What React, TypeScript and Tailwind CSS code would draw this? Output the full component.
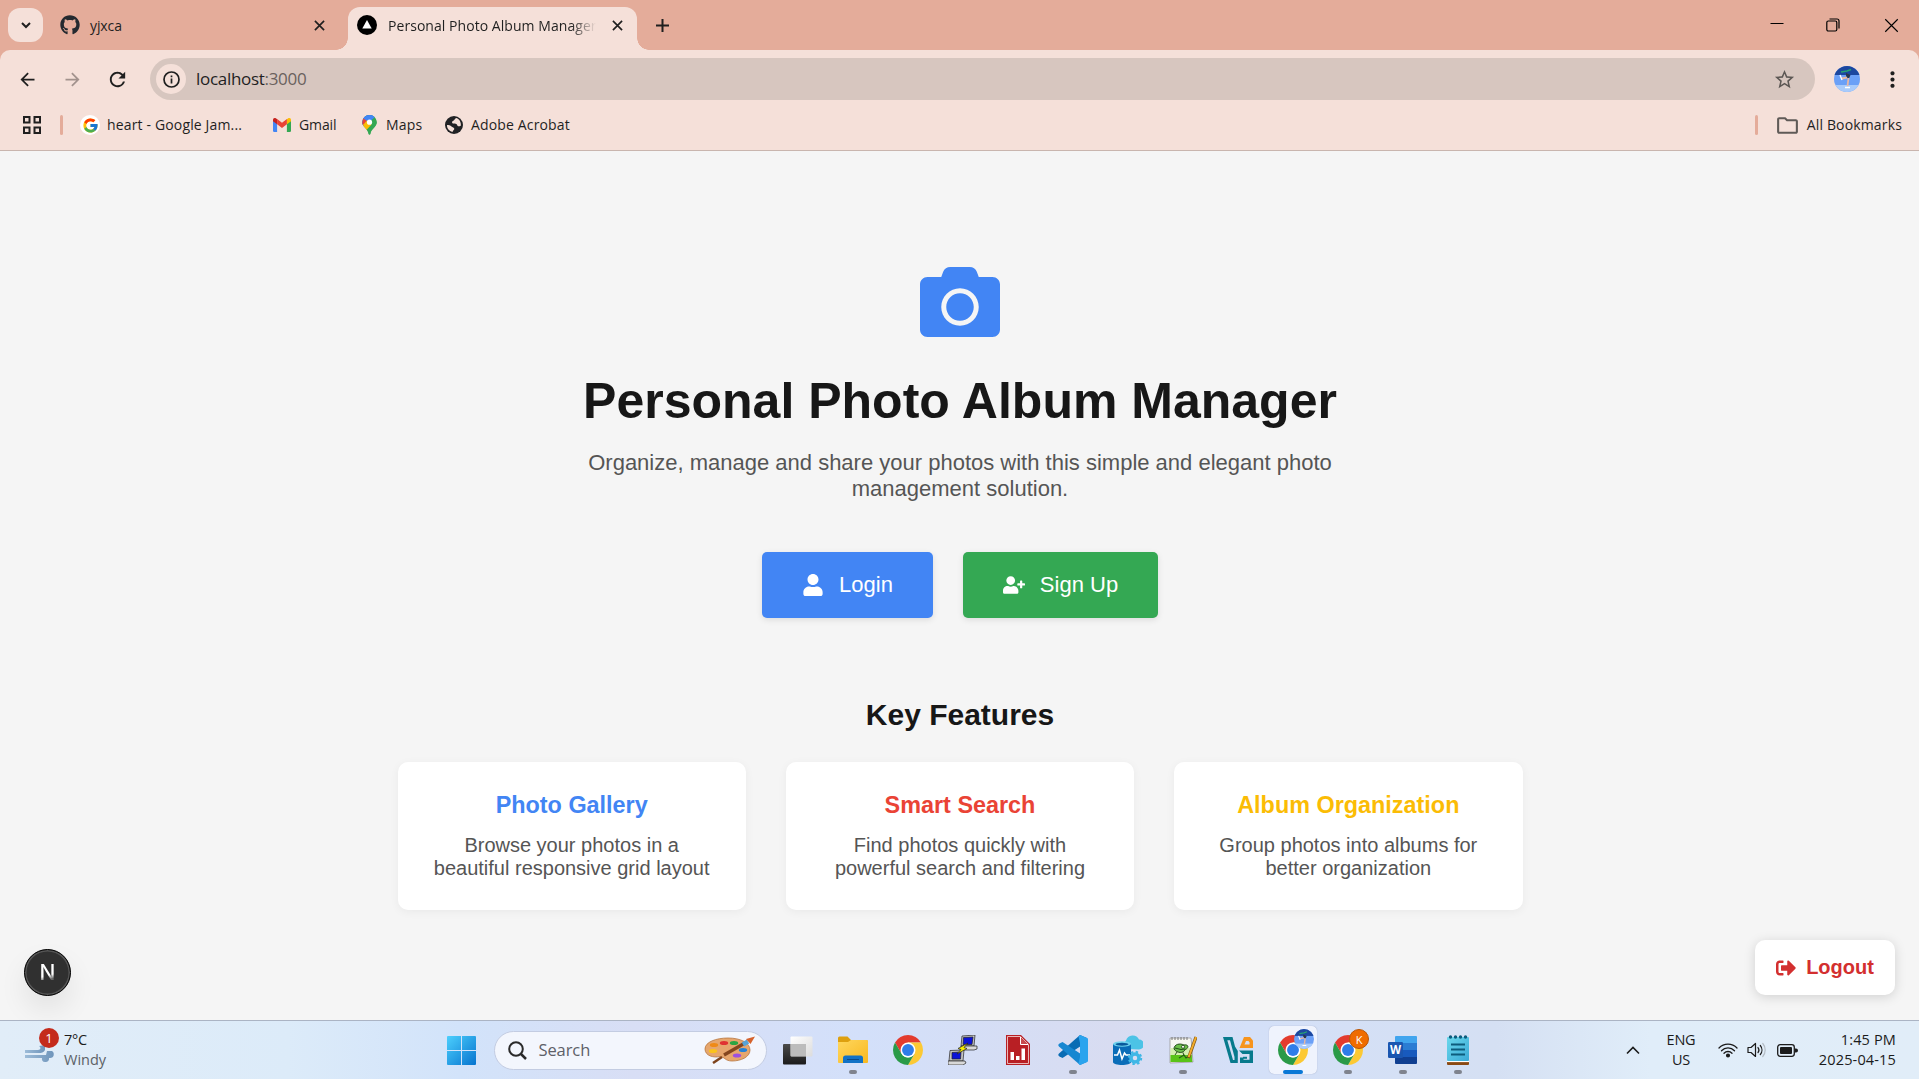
import type { ReactNode } from "react";
import { FaCamera, FaUser, FaUserPlus, FaSignOutAlt, FaGithub } from "react-icons/fa";
import { FcGoogle } from "react-icons/fc";
import {
  MdArrowBack,
  MdArrowForward,
  MdRefresh,
  MdStarBorder,
  MdMoreVert,
  MdOutlineFolder,
} from "react-icons/md";

/* ---------- small glyphs ---------- */

function Cross({ size, width }: { size: number; width: number }) {
  return (
    <svg width={size} height={size} viewBox="0 0 12 12" fill="none" stroke="currentColor" strokeWidth={width}>
      <path d="M1 1L11 11M11 1L1 11" />
    </svg>
  );
}

function GmailIcon() {
  return (
    <svg width="18" height="14" viewBox="0 0 18 14">
      <path d="M0 2.2V12.8A1.2 1.2 0 0 0 1.2 14H4.1V5.2Z" fill="#4285f4" />
      <path d="M18 2.2V12.8A1.2 1.2 0 0 1 16.8 14H13.9V5.2Z" fill="#34a853" />
      <path d="M13.9 1.2V6.3L18 3.2V1.9C18 .2 16.1-.6 14.8.4Z" fill="#fbbc04" />
      <path d="M4.1 1.2V6.3L0 3.2V1.9C0 .2 1.9-.6 3.2.4Z" fill="#c5221f" />
      <path d="M4.1 6.3V1.1L9 4.8L13.9 1.1V6.3L9 10Z" fill="#ea4335" />
    </svg>
  );
}

function MapsIcon() {
  return (
    <svg width="15" height="20" viewBox="0 0 15 20">
      <defs>
        <clipPath id="pin">
          <path d="M7.5 0A7.2 7.2 0 0 0 .3 7.2C.3 12 6 13.500 6.700 19A.85.85 0 0 0 8.300 19C9 13.500 14.700 12 14.700 7.200A7.200 7.200 0 0 0 7.500 0Z" />
        </clipPath>
      </defs>
      <g clipPath="url(#pin)">
        <rect width="15" height="20" fill="#34a853" />
        <path d="M-1 14L16-3H-1Z" fill="#1a73e8" />
        <path d="M0 12L7.500 7L15 0V-2H6L0 4Z" fill="#4285f4" />
        <path d="M-2 1L5 6L0 12Z" fill="#ea4335" />
        <path d="M5 5.500L10 10L3 17L-1 12Z" fill="#fbbc04" />
        <path d="M9.500 9.500L15 4V20H5L4 15.500Z" fill="#34a853" />
      </g>
      <circle cx="7.500" cy="7.200" r="2.600" fill="#fff" />
    </svg>
  );
}

function GlobeIcon() {
  return (
    <svg width="18" height="18" viewBox="0 0 18 18" className="shrink-0">
      <circle cx="9" cy="9" r="9" fill="#202124" />
      <path
        d="M11.500 2C9.500 2.500 9.700 4.300 8 5C6.500 5.500 6.800 7.300 8.300 7.600C10 8 11.800 7.600 12.300 9.300C12.600 10.700 14 10.500 15.800 9.800C16.300 6.500 14.500 3.200 11.500 2Z"
        fill="#f5e0d9"
      />
      <path
        d="M2 9C3.500 9 5.500 9.200 6.500 10.500C7.300 11.500 9.300 11.200 9.300 12.800C9.200 14.300 7.800 14.300 7.500 15.900C4.300 15.300 1.800 12.500 2 9Z"
        fill="#f5e0d9"
      />
    </svg>
  );
}

function Skater({ size }: { size: number }) {
  return (
    <svg width={size} height={size} viewBox="0 0 26 26">
      <defs>
        <clipPath id="avatar">
          <circle cx="13" cy="13" r="13" />
        </clipPath>
      </defs>
      <g clipPath="url(#avatar)">
        <rect width="26" height="26" fill="#6ba0f7" />
        <rect width="26" height="9" fill="#1c479f" />
        <rect y="19" width="26" height="7" fill="#a9cbfb" />
        <path d="M7 6L13 5L17 3.500" stroke="#27a372" strokeWidth="1.500" fill="none" />
        <path d="M12 7L16.500 9L15 12.500L12 11Z" fill="#28384c" />
        <path d="M13 11.500L8 12.500M14.500 12L13.500 20" stroke="#e8b7a3" strokeWidth="1.800" fill="none" />
        <path d="M6 9L8 14M11 21.500H16" stroke="#fff" strokeWidth="1.400" fill="none" />
      </g>
    </svg>
  );
}

/* ---------- taskbar icons ---------- */

function WindowsIcon() {
  return (
    <svg width="29" height="29" viewBox="0 0 29 29">
      <defs>
        <linearGradient id="win" x1="0" y1="0" x2="1" y2="1">
          <stop offset="0" stopColor="#4ccffd" />
          <stop offset="1" stopColor="#0674cf" />
        </linearGradient>
      </defs>
      <path
        d="M1 0H14V14H0V1A1 1 0 0 1 1 0ZM15 0H28A1 1 0 0 1 29 1V14H15ZM0 15H14V29H1A1 1 0 0 1 0 28ZM15 15H29V28A1 1 0 0 1 28 29H15Z"
        fill="url(#win)"
      />
    </svg>
  );
}

function PaletteIcon() {
  return (
    <svg width="52" height="28" viewBox="0 0 52 28">
      <path
        d="M1 13C1 6 12 2 24 2C37 2 46 7 46 14C46 21 37 25 28 25C21 25 21 21 16 20.500C10 22 1 20 1 13Z"
        fill="#e6a66d"
        stroke="#b8763f"
        strokeWidth=".8"
      />
      <ellipse cx="10" cy="9" rx="4.200" ry="2" fill="#ef8a17" />
      <ellipse cx="20" cy="7" rx="4.200" ry="2" fill="#e03232" />
      <ellipse cx="30" cy="7" rx="4.200" ry="2" fill="#2ba543" />
      <ellipse cx="9" cy="15" rx="4.200" ry="2" fill="#fbc31c" />
      <ellipse cx="39" cy="14" rx="4.200" ry="2" fill="#2482d6" />
      <ellipse cx="33" cy="19.500" rx="4.200" ry="2" fill="#9c4fe0" />
      <path d="M9 27L18 21" stroke="#7d431b" strokeWidth="2.500" />
      <path d="M20 19L41 7" stroke="#84461e" strokeWidth="3.200" />
      <path d="M39 8.500L44 5.500" stroke="#57a3d6" strokeWidth="4.500" />
      <path d="M42 3L51 .5L46.500 8Z" fill="#d5622c" />
    </svg>
  );
}

function TaskViewIcon() {
  return (
    <svg width="30" height="29" viewBox="0 0 30 29">
      <defs>
        <linearGradient id="tv1" x1="0" y1="0" x2="0" y2="1">
          <stop offset="0" stopColor="#4a4a4a" />
          <stop offset="1" stopColor="#1b1b1b" />
        </linearGradient>
        <linearGradient id="tv2" x1="0" y1="0" x2="1" y2="1">
          <stop offset="0" stopColor="#ffffff" />
          <stop offset="1" stopColor="#dcdcdc" />
        </linearGradient>
      </defs>
      <rect x="0" y="8" width="23" height="20.500" rx="1" fill="url(#tv1)" />
      <rect x="7.500" y="0.500" width="22" height="20" rx="1" fill="url(#tv2)" />
      <rect x="8" y="8" width="15" height="12" fill="#bcbcbc" />
    </svg>
  );
}

function ExplorerIcon() {
  return (
    <svg width="30" height="28" viewBox="0 0 30 28">
      <defs>
        <linearGradient id="fold" x1="0" y1="0" x2="1" y2="1">
          <stop offset="0" stopColor="#ffd75e" />
          <stop offset="1" stopColor="#f8b81f" />
        </linearGradient>
      </defs>
      <path d="M0 2A1.500 1.500 0 0 1 1.500.5H9.500L13 4H28.500A1.500 1.500 0 0 1 30 5.500V12H0Z" fill="#dea00f" />
      <path d="M0 6H10L13 4H28.500A1.500 1.500 0 0 1 30 5.500V26A1 1 0 0 1 29 27H1A1 1 0 0 1 0 26Z" fill="url(#fold)" />
      <path d="M5 27V22A2.500 2.500 0 0 1 7.500 19.500H22.500A2.500 2.500 0 0 1 25 22V27Z" fill="#1272c6" />
      <path d="M9 23.500H21" stroke="#0a4a8a" strokeWidth="1" />
    </svg>
  );
}

function ChromeIcon() {
  return (
    <svg width="30" height="30" viewBox="0 0 48 48">
      <path d="M24 12H44.780A24 24 0 0 0 3.220 12L13.610 30Z" fill="#e33b2e" />
      <path d="M34.390 30L24 48A24 24 0 0 0 44.780 12H24Z" fill="#fcc934" />
      <path d="M13.610 30L3.220 12A24 24 0 0 0 24 48L34.390 30A12 12 0 0 1 13.610 30Z" fill="#2a9a48" />
      <circle cx="24" cy="24" r="12" fill="#fff" />
      <circle cx="24" cy="24" r="9.500" fill="#2f7de9" />
    </svg>
  );
}

function PuttyIcon() {
  return (
    <svg width="30" height="30" viewBox="0 0 30 30" stroke="#222" strokeWidth=".7">
      <path d="M14 1L27 0L26 11H13Z" fill="#c4c4c4" />
      <path d="M15.500 2.500L25 2L24 9.500H15Z" fill="#0b12d8" />
      <path d="M13 11H29V14L26 15H12Z" fill="#d8d8d8" />
      <path d="M2 15.500L16 15L15 26H1Z" fill="#c4c4c4" />
      <path d="M4 17.500L13 17L12.500 24H4Z" fill="#0b12d8" />
      <path d="M0 26H17L18 28L15 30H0Z" fill="#d8d8d8" />
      <path d="M20 8L10 13.500L13 14.500L9 19L19 13.500L16 12.500Z" fill="#f8ee00" />
    </svg>
  );
}

function ReportIcon() {
  return (
    <svg width="24" height="30" viewBox="0 0 24 30">
      <path d="M0 0H15L24 9V30H0Z" fill="#b81f24" />
      <path d="M1.500 1.500H14.500L22.500 9.500V28.500H1.500Z" fill="none" stroke="#e9b6b6" strokeWidth="1" />
      <path d="M14.500 2V9.500H22" fill="#c84a4d" stroke="#fff" strokeWidth="1" />
      <path d="M4.500 17H8V25H4.500ZM10 21H13.500V25H10ZM15.500 13.500H19V25H15.500Z" fill="#fff" />
    </svg>
  );
}

function CodeIcon() {
  return (
    <svg width="30" height="30" viewBox="0 0 30 30">
      <path d="M22 0L29 3V7L4.500 23L1.500 21.500C0 20.500 0 19.500 1 18.500Z" fill="#0a6cb4" />
      <path d="M22 30L29 27V23L4.500 7L1.500 8.500C0 9.500 0 10.500 1 11.500Z" fill="#1787d1" />
      <path d="M22 0L30 3.500V26.500L22 30L20.500 28.500L22 22V8L20.500 1.500Z" fill="#2ba4ee" />
    </svg>
  );
}

function DatabaseIcon() {
  return (
    <svg width="30" height="30" viewBox="0 0 30 30">
      <path d="M15 14A5 5 0 0 1 13 5.500A7 7 0 0 1 26 4.500A5 5 0 0 1 26 14.500Z" fill="#4cc3e6" />
      <path d="M0 9V27C0 31 18 31 18 27V9Z" fill="#0a6db8" />
      <ellipse cx="9" cy="9" rx="9" ry="2.800" fill="#6fd3ee" />
      <ellipse cx="9" cy="9.200" rx="6.500" ry="1.500" fill="#0a5a9c" />
      <path d="M1 20H4.500L6.500 15L9 24L11.500 18L13 20H17" stroke="#fff" strokeWidth="1.500" fill="none" />
      <circle cx="22" cy="23" r="4" fill="none" stroke="#3fb7e6" strokeWidth="3.500" />
      <circle cx="22" cy="23" r="6.200" fill="none" stroke="#3fb7e6" strokeWidth="2" strokeDasharray="2.430 2.430" />
    </svg>
  );
}

function NotepadPlusIcon() {
  return (
    <svg width="28" height="28" viewBox="0 0 28 28">
      <path d="M1 2H22L24 26L1 27Z" fill="#f7f7f2" stroke="#999" strokeWidth=".8" />
      <path d="M1.500 12H22.500L23 26H1.500Z" fill="#d3efae" />
      <path d="M1.500 19H22.800L23.300 26H1.500Z" fill="#59c318" />
      <path d="M5 13C5 8 11 7 15 9C20 8 20 12.500 16 13.500C15 17.500 8 17.500 5 13Z" fill="#6cc04a" stroke="#193f12" strokeWidth=".9" />
      <path d="M6 12L12 13.500L16 13M8 16L6 19M14 16.500L15 20" stroke="#193f12" strokeWidth=".9" fill="none" />
      <circle cx="14" cy="10.800" r="1.500" fill="#fff" stroke="#193f12" strokeWidth=".8" />
      <path d="M10 22L15 19L17 22L20 20" stroke="#245e17" fill="none" strokeWidth="1.200" />
      <path d="M3 1V4M6 1V4M9 1V4M12 1V4M15 1V4M18 1V4" stroke="#777" />
      <path d="M27 1L19.500 22" stroke="#7a5416" strokeWidth="3.200" />
      <path d="M27 1L19.700 21" stroke="#f3ac2b" strokeWidth="2" />
    </svg>
  );
}

function VirtualBoxIcon() {
  return (
    <svg width="30" height="27" viewBox="0 0 30 27" fill="none">
      <path d="M0 0H9.500L12 9.500L14.800 14V26H7.500Z" fill="#087a8c" />
      <path d="M4.300 3.300H7L11.500 20V23H10Z" fill="#d5def4" />
      <path d="M21 0H27L30 3.500V11H16.500Z" fill="#f7941d" />
      <path d="M23 4H25.500L26.500 5.500V7.500H21.500Z" fill="#d5def4" />
      <path d="M16 13.500H30V26H17V19.500H22" fill="#087a8c" />
      <path d="M16 17H26.500V22.800H20.500V20.500H16Z" fill="#d5def4" />
      <path d="M20 20.800H24" stroke="#087a8c" strokeWidth="2" />
    </svg>
  );
}

function WordIcon() {
  return (
    <svg width="30" height="28" viewBox="0 0 30 28">
      <path d="M7 1A1 1 0 0 1 8 0H28A1 1 0 0 1 29 1V7H7Z" fill="#41a5ee" />
      <rect x="7" y="7" width="22" height="7" fill="#2b7cd3" />
      <rect x="7" y="14" width="22" height="7" fill="#185abd" />
      <path d="M7 21H29V27A1 1 0 0 1 28 28H8A1 1 0 0 1 7 27Z" fill="#103f91" />
      <rect x="0" y="6" width="15" height="16" rx="1.200" fill="#1a56b0" />
      <text x="7.500" y="18" textAnchor="middle" fontSize="11.500" fontWeight="700" fill="#fff" fontFamily="Open Sans, sans-serif">
        W
      </text>
    </svg>
  );
}

function NotepadIcon() {
  return (
    <svg width="22" height="30" viewBox="0 0 22 30">
      <defs>
        <linearGradient id="pad" x1="0" y1="0" x2="1" y2="1">
          <stop offset="0" stopColor="#6ad8ec" />
          <stop offset="1" stopColor="#3aa9d6" />
        </linearGradient>
      </defs>
      <path d="M0 26H22V29A1 1 0 0 1 21 30H1A1 1 0 0 1 0 29Z" fill="#8a4a14" />
      <rect y="25.500" width="22" height="1.600" fill="#fff" />
      <rect y="2" width="22" height="24" rx="1" fill="url(#pad)" />
      <path d="M4 9.500H18M4 14.500H18M4 19.500H18" stroke="#0d5c7c" strokeWidth="1.800" />
      <g fill="#0d5c7c">
        <circle cx="3.500" cy="2" r="1.700" />
        <circle cx="8.500" cy="2" r="1.700" />
        <circle cx="13.500" cy="2" r="1.700" />
        <circle cx="18.500" cy="2" r="1.700" />
      </g>
    </svg>
  );
}

function WindIcon() {
  return (
    <svg width="29" height="18" viewBox="0 0 29 18">
      <defs>
        <linearGradient id="wind" x1="0" y1="0" x2="1" y2="0">
          <stop offset="0" stopColor="#9dbcd8" />
          <stop offset="1" stopColor="#6f95bb" />
        </linearGradient>
      </defs>
      <path d="M0 5H13C16 5 16 2 14 1L20 0V5C19 7.500 16 8 14 8H0Z" fill="url(#wind)" />
      <path d="M0 10H21L22 6H27C29 7 29 9 28.500 11C27.500 13 25.500 13 24 13C24.500 16 22 17.500 20 17C17.500 17 16.500 15 17 13H0Z" fill="url(#wind)" />
    </svg>
  );
}

function WifiIcon() {
  return (
    <svg width="20" height="16" viewBox="0 0 20 16" fill="none" stroke="#1b1b1b" strokeWidth="1.300" strokeLinecap="round">
      <path d="M1 6A12.500 12.500 0 0 1 19 6M3.500 8.700A9 9 0 0 1 16.500 8.700M6 11.200A5.600 5.600 0 0 1 14 11.200" />
      <circle cx="10" cy="13.500" r="1.400" fill="#1b1b1b" />
    </svg>
  );
}

function VolumeIcon() {
  return (
    <svg width="20" height="16" viewBox="0 0 20 16" fill="none" stroke="#1b1b1b" strokeWidth="1.200" strokeLinecap="round" strokeLinejoin="round">
      <path d="M1 5.500H4L8.500 1.500V14.500L4 10.500H1Z" />
      <path d="M11 5.500A4 4 0 0 1 11 10.500M13.300 3.500A7 7 0 0 1 13.300 12.500" />
      <path d="M15.800 1.500A10 10 0 0 1 15.800 14.500" stroke="#b4bcc4" />
    </svg>
  );
}

function BatteryIcon() {
  return (
    <svg width="21" height="13" viewBox="0 0 21 13">
      <rect x=".7" y=".7" width="16.600" height="11.600" rx="2.500" fill="none" stroke="#1b1b1b" strokeWidth="1.300" />
      <rect x="3" y="3" width="12" height="7" rx="1" fill="#1b1b1b" />
      <path d="M18 4.500H19A1.500 1.500 0 0 1 19 8.500H18Z" fill="#1b1b1b" />
    </svg>
  );
}

/* ---------- browser chrome ---------- */

function TabStrip() {
  return (
    <div className="flex h-[50px] items-center bg-[#e4ac9a] text-[#1f1f1f]">
      <div className="ml-2 flex h-[34px] w-[35px] items-center justify-center rounded-[12px] bg-[#f5e0d9]">
        <svg width="10" height="7" viewBox="0 0 10 7" fill="none" stroke="#1f1f1f" strokeWidth="2">
          <path d="M1 1L5 5L9 1" />
        </svg>
      </div>
      <div className="ml-[17px] flex w-[288px] items-center">
        <FaGithub size={20} color="#24292f" />
        <span className="ml-[10px] text-[14px] tracking-[-0.1px]">yjxca</span>
        <span className="mr-[23px] ml-auto">
          <Cross size={11} width={1.8} />
        </span>
      </div>
      <div className="relative flex h-[43px] w-[289px] items-center self-end rounded-t-[12px] bg-[#f5e0d9] pb-[7px]">
        <div className="absolute bottom-0 -left-3 h-3 w-3 bg-[radial-gradient(circle_at_0_0,transparent_11.500px,#f5e0d9_12px)]" />
        <div className="absolute -right-3 bottom-0 h-3 w-3 bg-[radial-gradient(circle_at_100%_0,transparent_11.500px,#f5e0d9_12px)]" />
        <svg className="ml-[9px] shrink-0" width="20" height="20" viewBox="0 0 20 20">
          <circle cx="10" cy="10" r="10" fill="#000" />
          <path d="M10 5L14.700 13.500H5.300Z" fill="#fff" />
        </svg>
        <span className="ml-[11px] w-[208px] overflow-hidden bg-[linear-gradient(90deg,#1f1f1f_88%,transparent)] bg-clip-text text-[14px] tracking-[0.05px] whitespace-nowrap text-transparent">
          Personal Photo Album Manager
        </span>
        <span className="ml-[16px]">
          <Cross size={11} width={1.8} />
        </span>
      </div>
      <svg className="ml-[19px]" width="13" height="13" viewBox="0 0 13 13" stroke="#1f1f1f" strokeWidth="2">
        <path d="M6.500 0V13M0 6.500H13" />
      </svg>
      <div className="mr-[20px] ml-auto flex items-center text-black">
        <svg width="14" height="14" viewBox="0 0 14 14" stroke="#000" strokeWidth="1">
          <path d="M0.500 5.500H13.500" />
        </svg>
        <svg className="ml-[42px]" width="14" height="14" viewBox="0 0 14 14" fill="none" stroke="#000" strokeWidth="1.200">
          <rect x=".8" y="3" width="10" height="10" rx="1.500" />
          <path d="M3.500 1H11A2 2 0 0 1 13 3V10.500" />
        </svg>
        <span className="ml-[44px]">
          <Cross size={15} width={0.9} />
        </span>
      </div>
    </div>
  );
}

function Toolbar() {
  return (
    <div className="bg-[#e4ac9a]">
      <div className="flex h-[50px] items-center rounded-t-[10px] bg-[#f5e0d9] pt-[8px]">
        <MdArrowBack className="ml-[17px]" size={21} color="#1f1f1f" />
        <MdArrowForward className="ml-[24px]" size={21} color="#a2928d" />
        <MdRefresh className="ml-[23px]" size={23} color="#1f1f1f" />
        <div className="ml-[21px] flex h-[42px] w-[1665px] items-center rounded-full bg-[#d7c6bf]">
          <div className="ml-[6px] flex h-[30px] w-[30px] items-center justify-center rounded-full bg-[#f5e0d9]">
            <svg width="17" height="17" viewBox="0 0 17 17" fill="none" stroke="#1f1f1f" strokeWidth="1.700">
              <circle cx="8.500" cy="8.500" r="7.500" />
              <path d="M8.500 7.500V12.500M8.500 4.500V6.200" />
            </svg>
          </div>
          <span className="ml-[10px] text-[17px] tracking-[-0.3px] text-[#1f1f1f]">
            localhost<span className="text-[#6a615d]">:3000</span>
          </span>
          <MdStarBorder className="mr-[19px] ml-auto" size={23} color="#5c5754" />
        </div>
        <div className="ml-[19px]">
          <Skater size={26} />
        </div>
        <MdMoreVert className="ml-[20px]" size={25} color="#1f1f1f" />
      </div>
    </div>
  );
}

function Bookmark({ icon, label, className }: { icon: ReactNode; label: string; className: string }) {
  return (
    <div className={`flex items-center ${className}`}>
      <div className="flex w-[20px] justify-center">{icon}</div>
      <span className="ml-[7px] pb-px whitespace-nowrap">{label}</span>
    </div>
  );
}

function BookmarksBar() {
  return (
    <div className="flex h-[51px] items-center border-b border-[#c9b5ae] bg-[#f5e0d9] text-[14px] tracking-[0.15px] text-[#1f1f1f]">
      <svg className="ml-[23px]" width="18" height="18" viewBox="0 0 18 18" fill="none" stroke="#1f1f1f" strokeWidth="2">
        <rect x="1" y="1" width="5.500" height="5.500" />
        <rect x="11.500" y="1" width="5.500" height="5.500" />
        <rect x="1" y="11.500" width="5.500" height="5.500" />
        <rect x="11.500" y="11.500" width="5.500" height="5.500" />
      </svg>
      <div className="ml-[19px] h-[20px] w-[3px] rounded bg-[#e4ac9a]" />
      <Bookmark
        className="ml-[17px] w-[192px]"
        label="heart - Google Jam..."
        icon={
          <span className="flex h-5 w-5 shrink-0 items-center justify-center rounded-full bg-white">
            <FcGoogle size={17} />
          </span>
        }
      />
      <Bookmark className="w-[87px] tracking-[-0.1px]" label="Gmail" icon={<GmailIcon />} />
      <Bookmark className="w-[85px]" label="Maps" icon={<MapsIcon />} />
      <Bookmark className="" label="Adobe Acrobat" icon={<GlobeIcon />} />
      <div className="ml-auto h-[20px] w-[3px] rounded bg-[#e4ac9a]" />
      <MdOutlineFolder className="ml-[17px]" size={25} color="#5f5a57" />
      <span className="mr-[17px] ml-[7px] pb-px">All Bookmarks</span>
    </div>
  );
}

/* ---------- page ---------- */

const features = [
  { title: "Photo Gallery", color: "text-[#4285f4]", lines: ["Browse your photos in a", "beautiful responsive grid layout"] },
  { title: "Smart Search", color: "text-[#ea4335]", lines: ["Find photos quickly with", "powerful search and filtering"] },
  { title: "Album Organization", color: "text-[#fbbc05]", lines: ["Group photos into albums for", "better organization"] },
];

function Page() {
  return (
    <main className="relative flex h-[869px] flex-col items-center overflow-hidden bg-[#f5f5f5] pt-[111px] pl-px text-center font-['Liberation_Sans',Arial,sans-serif] text-[#171717]">
      <FaCamera size={80} color="#4285f4" />
      <h1 className="mt-[30px] text-[50px] leading-[58px] font-bold">Personal Photo Album Manager</h1>
      <p className="mt-5 w-[750px] text-[22px] leading-[26px] text-[#555]">
        Organize, manage and share your photos with this simple and elegant photo management solution.
      </p>
      <div className="mt-[50px] flex gap-[30px] text-[22px] text-white">
        <button className="flex h-[66px] w-[171px] items-center justify-center gap-[15px] rounded-[5px] bg-[#4285f4] shadow-[0_2px_6px_rgba(0,0,0,0.1)]">
          <FaUser />
          <span className="pb-0.5">Login</span>
        </button>
        <button className="flex h-[66px] w-[195px] items-center justify-center gap-[15px] rounded-[5px] bg-[#34a853] shadow-[0_2px_6px_rgba(0,0,0,0.1)]">
          <FaUserPlus />
          <span className="pb-0.5">Sign Up</span>
        </button>
      </div>
      <h2 className="mt-20 text-[30px] leading-[34px] font-bold">Key Features</h2>
      <div className="mt-[30px] grid w-[1125px] grid-cols-3 gap-10">
        {features.map((f) => (
          <section key={f.title} className="h-[148px] rounded-[10px] bg-white pt-[30px] shadow-[0_2px_10px_rgba(0,0,0,0.05)]">
            <h3 className={`text-[23.4px] leading-[27px] font-bold ${f.color}`}>{f.title}</h3>
            <p className="mt-[15px] text-[20px] leading-[23px] text-[#555]">
              {f.lines[0]}
              <br />
              {f.lines[1]}
            </p>
          </section>
        ))}
      </div>
      <button className="absolute right-6 bottom-[25px] flex h-[55px] w-[140px] items-center justify-center gap-[10px] rounded-[10px] bg-white text-[20px] font-bold text-[#d32f2f] shadow-[0_2px_12px_rgba(0,0,0,0.15)]">
        <FaSignOutAlt />
        <span className="pb-0.5">Logout</span>
      </button>
      <div className="absolute bottom-[24px] left-[24px] flex h-[47px] w-[47px] items-center justify-center rounded-full border border-black bg-[#303030] shadow-[inset_0_0_0_1.500px_#555,0_14px_28px_rgba(0,0,0,0.08)]">
        <span className="bg-[linear-gradient(165deg,#fff_62%,#666_80%)] bg-clip-text font-['Inter',sans-serif] text-[21px] leading-none font-medium text-transparent">
          N
        </span>
      </div>
    </main>
  );
}

/* ---------- taskbar ---------- */

function Task({ children, state = "none" }: { children: ReactNode; state?: "none" | "open" | "active" }) {
  return (
    <div className="flex h-[58px] w-[55px] shrink-0 items-center justify-center">
      <div
        className={`relative flex h-12 w-12 items-center justify-center rounded-[5px] ${
          state === "active" ? "bg-[#eff3fd] shadow-[0_0_1px_rgba(80,90,130,0.5)]" : ""
        }`}
      >
        {children}
        {state === "open" && <span className="absolute bottom-0 left-5 h-1 w-2 rounded-full bg-[#7f838e]" />}
        {state === "active" && <span className="absolute bottom-0 left-[14px] h-1 w-5 rounded-full bg-[#0a78d6]" />}
      </div>
    </div>
  );
}

function Taskbar() {
  return (
    <footer className="flex h-[59px] items-center border-t border-[#abb4c4] bg-[linear-gradient(90deg,#e1edf8_0%,#dcebf9_15%,#d2e3fa_24%,#d8def5_33%,#d3e0fa_45%,#d8dcf1_58%,#d4e0f8_65%,#d5e0f3_78%,#e0edf9_86%,#e1edf8_100%)] text-[#1b1b1b]">
      <div className="flex w-[433.500px] shrink-0 items-center pl-[25px]">
        <div className="relative pt-[8px]">
          <WindIcon />
          <span className="absolute -top-[9px] left-[14px] flex h-5 w-5 items-center justify-center rounded-full bg-[#c42b1c] text-[13px] leading-none text-white">
            1
          </span>
        </div>
        <div className="ml-[10px] text-[14.500px] leading-[20px] tracking-[-0.2px]">
          <div>7°C</div>
          <div className="tracking-[0px] text-[#5c6166]">Windy</div>
        </div>
      </div>
      <Task>
        <WindowsIcon />
      </Task>
      <div className="mr-[3.500px] ml-[5px] flex h-[39px] w-[273.500px] shrink-0 items-center rounded-full border border-[#c3cce2] bg-[#f3f6fd]">
        <svg className="ml-[13px]" width="19" height="19" viewBox="0 0 19 19" fill="none" stroke="#2a2a2a" strokeWidth="2">
          <circle cx="8" cy="8" r="6.800" />
          <path d="M13 13L18 18" strokeWidth="2.500" />
        </svg>
        <span className="ml-[12px] text-[16.500px] tracking-[-0.1px] text-[#5d6068]">Search</span>
        <span className="mr-[10px] ml-auto">
          <PaletteIcon />
        </span>
      </div>
      <Task>
        <TaskViewIcon />
      </Task>
      <Task state="open">
        <ExplorerIcon />
      </Task>
      <Task>
        <ChromeIcon />
      </Task>
      <Task>
        <PuttyIcon />
      </Task>
      <Task>
        <ReportIcon />
      </Task>
      <Task state="open">
        <CodeIcon />
      </Task>
      <Task>
        <DatabaseIcon />
      </Task>
      <Task state="open">
        <NotepadPlusIcon />
      </Task>
      <Task>
        <VirtualBoxIcon />
      </Task>
      <Task state="active">
        <ChromeIcon />
        <span className="absolute top-[3px] left-[25px]">
          <Skater size={20} />
        </span>
      </Task>
      <Task state="open">
        <ChromeIcon />
        <span className="absolute top-[3px] left-[25px] flex h-5 w-5 items-center justify-center rounded-full border border-[#b95606] bg-[#ef6c00] text-[11px] leading-none text-white">
          K
        </span>
      </Task>
      <Task state="open">
        <WordIcon />
      </Task>
      <Task state="open">
        <NotepadIcon />
      </Task>
      <div className="ml-auto flex shrink-0 items-center pr-[23px] text-[14.500px] leading-[20px] tracking-[-0.2px]">
        <svg width="14" height="9" viewBox="0 0 14 9" fill="none" stroke="#1b1b1b" strokeWidth="1.600">
          <path d="M1 7.500L7 1.500L13 7.500" />
        </svg>
        <div className="ml-[26px] w-[30px] text-center">
          <div>ENG</div>
          <div>US</div>
        </div>
        <span className="ml-[22px]">
          <WifiIcon />
        </span>
        <span className="ml-[9px]">
          <VolumeIcon />
        </span>
        <span className="ml-[10px]">
          <BatteryIcon />
        </span>
        <div className="ml-[20px] w-[78px] text-right tracking-[0.15px] whitespace-nowrap">
          <div>1:45 PM</div>
          <div>2025-04-15</div>
        </div>
      </div>
    </footer>
  );
}

export default function App() {
  return (
    <div className="flex h-[1079px] w-[1919px] flex-col overflow-hidden font-['Open_Sans','Noto_Sans',sans-serif]">
      <TabStrip />
      <Toolbar />
      <BookmarksBar />
      <Page />
      <Taskbar />
    </div>
  );
}
